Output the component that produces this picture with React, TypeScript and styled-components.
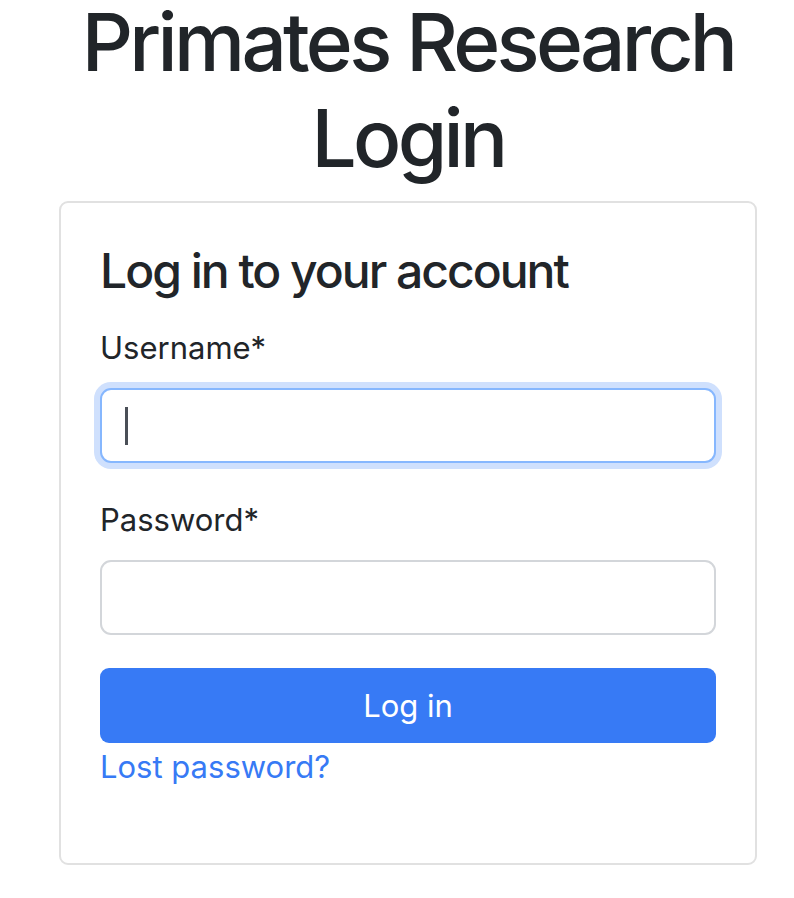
import React from "react";
import styled, { createGlobalStyle } from "styled-components";

const GlobalStyle = createGlobalStyle`
  html, body {
    margin: 0;
    padding: 0;
    background: #ffffff;
  }
  body {
    font-family: Inter, "Noto Sans", "Liberation Sans", sans-serif;
    color: #212529;
  }
  * { box-sizing: border-box; }
`;

const Page = styled.main`
  width: 794px;
  padding-left: 59px;
`;

const Column = styled.div`
  width: 698px;
  display: flex;
  flex-direction: column;
`;

const Title = styled.h1`
  margin: 0 0 21px;
  display: flex;
  flex-direction: column;
  gap: 12px;
  font-size: 80px;
  font-weight: 500;
  line-height: 84px;
  text-align: center;
  letter-spacing: -3.7px;
  white-space: nowrap;
  color: #212529;
`;

const TitleLine = styled.span`
  display: block;
`;

const Card = styled.section`
  border: 2px solid #e1e1e1;
  border-radius: 9px;
  padding: 39px 39px 72px;
  display: flex;
  flex-direction: column;
`;

const CardTitle = styled.h4`
  margin: 0 0 24px;
  font-size: 48px;
  font-weight: 500;
  line-height: 58px;
  letter-spacing: -2px;
  color: #212529;
`;

const Form = styled.form`
  display: flex;
  flex-direction: column;
`;

const Field = styled.div`
  display: flex;
  flex-direction: column;
  margin-bottom: 33px;
`;

const Label = styled.label`
  font-size: 31px;
  line-height: 48px;
  margin-bottom: 16px;
  color: #212529;
`;

const Input = styled.input<{ $focused?: boolean }>`
  width: 100%;
  height: 75px;
  border: 2px solid ${(p) => (p.$focused ? "#86b7fe" : "#d3d6da")};
  border-radius: 11px;
  padding: 0 24px;
  font-family: inherit;
  font-size: 31px;
  color: #212529;
  background: #fff;
  outline: none;
  box-shadow: ${(p) => (p.$focused ? "0 0 0 6px #cfe0fd" : "none")};
  caret-color: #495057;
`;

const Caret = styled.span`
  position: absolute;
  left: 25px;
  top: 19px;
  width: 3px;
  height: 38px;
  background: #4a4f57;
`;

const InputWrap = styled.div`
  position: relative;
`;

const Button = styled.button`
  height: 75px;
  width: 100%;
  border: none;
  border-radius: 9px;
  background: #377af5;
  color: #ffffff;
  font-family: inherit;
  font-size: 31px;
  line-height: 48px;
  cursor: pointer;
`;

const Link = styled.a`
  font-size: 31px;
  line-height: 48px;
  color: #377af5;
  text-decoration: none;
`;

export default function App() {
  return (
    <>
      <GlobalStyle />
      <Page>
        <Column>
          <Title>
            <TitleLine>Primates Research</TitleLine>
            <TitleLine>Login</TitleLine>
          </Title>
          <Card>
            <CardTitle>Log in to your account</CardTitle>
            <Form onSubmit={(e) => e.preventDefault()}>
              <Field>
                <Label htmlFor="username">Username*</Label>
                <InputWrap>
                  <Input id="username" type="text" $focused />
                  <Caret />
                </InputWrap>
              </Field>
              <Field>
                <Label htmlFor="password">Password*</Label>
                <Input id="password" type="password" />
              </Field>
              <Button type="submit">Log in</Button>
              <Link href="#">Lost password?</Link>
            </Form>
          </Card>
        </Column>
      </Page>
    </>
  );
}
